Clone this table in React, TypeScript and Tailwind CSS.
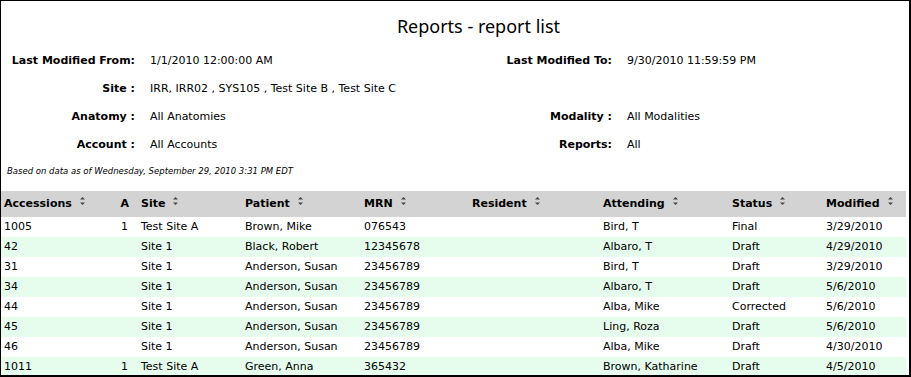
import React from "react";

const rows = [
  { acc: "1005", a: "1", site: "Test Site A", patient: "Brown, Mike", mrn: "076543", attending: "Bird, T", status: "Final", modified: "3/29/2010" },
  { acc: "42", a: "", site: "Site 1", patient: "Black, Robert", mrn: "12345678", attending: "Albaro, T", status: "Draft", modified: "4/29/2010" },
  { acc: "31", a: "", site: "Site 1", patient: "Anderson, Susan", mrn: "23456789", attending: "Bird, T", status: "Draft", modified: "3/29/2010" },
  { acc: "34", a: "", site: "Site 1", patient: "Anderson, Susan", mrn: "23456789", attending: "Albaro, T", status: "Draft", modified: "5/6/2010" },
  { acc: "44", a: "", site: "Site 1", patient: "Anderson, Susan", mrn: "23456789", attending: "Alba, Mike", status: "Corrected", modified: "5/6/2010" },
  { acc: "45", a: "", site: "Site 1", patient: "Anderson, Susan", mrn: "23456789", attending: "Ling, Roza", status: "Draft", modified: "5/6/2010" },
  { acc: "46", a: "", site: "Site 1", patient: "Anderson, Susan", mrn: "23456789", attending: "Alba, Mike", status: "Draft", modified: "4/30/2010" },
  { acc: "1011", a: "1", site: "Test Site A", patient: "Green, Anna", mrn: "365432", attending: "Brown, Katharine", status: "Draft", modified: "4/5/2010" },
];

function SortIcon() {
  return (
    <svg width="7" height="10" viewBox="0 0 7 10" className="inline-block ml-[7px] align-[1px]">
      <path d="M3.5 1 L6 3.5 L1 3.5 Z" fill="#444" />
      <path d="M1 6.5 L6 6.5 L3.5 9 Z" fill="#444" />
    </svg>
  );
}

function Th({ children, right, sort = true }: { children: React.ReactNode; right?: boolean; sort?: boolean }) {
  return (
    <th className={`font-bold text-left px-[3px] whitespace-nowrap ${right ? "text-right pr-[9px]" : ""}`}>
      {children}
      {sort && <SortIcon />}
    </th>
  );
}

function FilterLabel({ children }: { children: React.ReactNode }) {
  return <div className="font-bold text-right whitespace-nowrap">{children}</div>;
}

export default function App() {
  return (
    <div className="w-[911px] h-[377px] bg-white border-l border-t border-black border-r-2 border-b-2 overflow-hidden text-[11px] text-black font-['DejaVu_Sans',sans-serif]">
      <h1 className="h-[46px] pt-[13px] pl-[47px] text-center text-[18px] leading-[24px] font-['Noto_Sans','Open_Sans',sans-serif]">
        Reports - report list
      </h1>

      <div className="grid grid-cols-[134px_300px_147px_1fr] gap-x-[15px] auto-rows-[28px] items-center">
        <FilterLabel>Last Modified From:</FilterLabel>
        <div>1/1/2010 12:00:00 AM</div>
        <FilterLabel>Last Modified To:</FilterLabel>
        <div>9/30/2010 11:59:59 PM</div>

        <FilterLabel>Site :</FilterLabel>
        <div className="whitespace-nowrap">IRR, IRR02 , SYS105 , Test Site B , Test Site C</div>
        <div />
        <div />

        <FilterLabel>Anatomy :</FilterLabel>
        <div>All Anatomies</div>
        <FilterLabel>Modality :</FilterLabel>
        <div>All Modalities</div>

        <FilterLabel>Account :</FilterLabel>
        <div>All Accounts</div>
        <FilterLabel>Reports:</FilterLabel>
        <div>All</div>
      </div>

      <p className="pl-[6px] pt-[6px] h-[32px] text-[8.5px] italic leading-[12px]">
        Based on data as of Wednesday, September 29, 2010 3:31 PM EDT
      </p>

      <table className="table-fixed w-[905px] border-collapse">
        <colgroup>
          <col className="w-[115px]" />
          <col className="w-[22px]" />
          <col className="w-[104px]" />
          <col className="w-[119px]" />
          <col className="w-[108px]" />
          <col className="w-[131px]" />
          <col className="w-[129px]" />
          <col className="w-[94px]" />
          <col className="w-[83px]" />
        </colgroup>
        <thead>
          <tr className="bg-[#d3d3d3] h-[26px]">
            <Th>Accessions</Th>
            <Th right sort={false}>A</Th>
            <Th>Site</Th>
            <Th>Patient</Th>
            <Th>MRN</Th>
            <Th>Resident</Th>
            <Th>Attending</Th>
            <Th>Status</Th>
            <Th>Modified</Th>
          </tr>
        </thead>
        <tbody>
          {rows.map((r, i) => (
            <tr key={i} className={`h-[20px] ${i % 2 === 1 ? "bg-[#e6fcec]" : "bg-white"}`}>
              <td className="px-[3px] whitespace-nowrap">{r.acc}</td>
              <td className="px-[3px] pr-[10px] text-right">{r.a}</td>
              <td className="px-[3px] whitespace-nowrap">{r.site}</td>
              <td className="px-[3px] whitespace-nowrap">{r.patient}</td>
              <td className="px-[3px] whitespace-nowrap">{r.mrn}</td>
              <td className="px-[3px]"></td>
              <td className="px-[3px] whitespace-nowrap">{r.attending}</td>
              <td className="px-[3px] whitespace-nowrap">{r.status}</td>
              <td className="px-[3px] whitespace-nowrap">{r.modified}</td>
            </tr>
          ))}
        </tbody>
      </table>
    </div>
  );
}
